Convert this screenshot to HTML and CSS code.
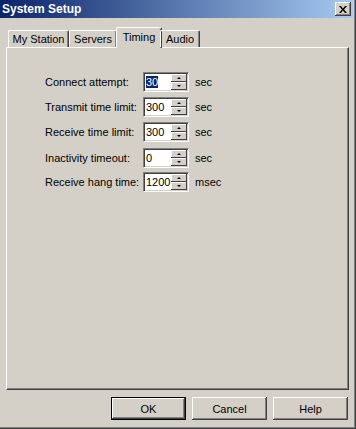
FILE: index.html
```html
<!DOCTYPE html>
<html lang="en">
  <head>
    <meta charset="UTF-8" />
    <meta name="viewport" content="width=device-width, initial-scale=1.0" />
    <title>System Setup</title>
    <link rel="stylesheet" href="styles.css">
  </head>
  <body>
    <div class="window">
      <div class="titlebar">
        <span class="title">System Setup</span>
        <button class="close" aria-label="Close">
          <svg width="8" height="7" viewBox="0 0 8 7">
            <path d="M0 0h2l2 2.5L6 0h2L5 3.5 8 7H6L4 4.5 2 7H0l3-3.5z" fill="#000" />
          </svg>
        </button>
      </div>

      <div class="tabs">
        <div class="tab tab-station">My Station</div>
        <div class="tab tab-servers">Servers</div>
        <div class="tab tab-timing selected">Timing</div>
        <div class="tab tab-audio">Audio</div>
      </div>

      <div class="panel">
        <div class="fields">
          <label class="label">Connect attempt:</label>
          <div class="spin-box">
            <span class="value"><span class="highlight">30</span></span>
            <span class="spinner"><span class="up"></span><span class="down"></span></span>
          </div>
          <span class="unit">sec</span>

          <label class="label">Transmit time limit:</label>
          <div class="spin-box">
            <span class="value">300</span>
            <span class="spinner"><span class="up"></span><span class="down"></span></span>
          </div>
          <span class="unit">sec</span>

          <label class="label">Receive time limit:</label>
          <div class="spin-box">
            <span class="value">300</span>
            <span class="spinner"><span class="up"></span><span class="down"></span></span>
          </div>
          <span class="unit">sec</span>

          <label class="label gap">Inactivity timeout:</label>
          <div class="spin-box gap">
            <span class="value">0</span>
            <span class="spinner"><span class="up"></span><span class="down"></span></span>
          </div>
          <span class="unit gap">sec</span>

          <label class="label">Receive hang time:</label>
          <div class="spin-box">
            <span class="value">1200</span>
            <span class="spinner"><span class="up"></span><span class="down"></span></span>
          </div>
          <span class="unit">msec</span>
        </div>
      </div>

      <div class="buttons">
        <button class="btn default">OK</button>
        <button class="btn">Cancel</button>
        <button class="btn">Help</button>
      </div>
    </div>
  </body>
</html>
```

FILE: styles.css
```css
body {
  margin: 0;
  font-family: "Liberation Sans", Arial, sans-serif;
  font-size: 11px;
  color: #000;
}
.window {
  width: 356px;
  height: 429px;
  box-sizing: border-box;
  background: #d4d0c8;
  border-right: 1px solid #404040;
  border-bottom: 1px solid #404040;
  box-shadow: inset -1px -1px #808080;
  display: flex;
  flex-direction: column;
}
.titlebar {
  height: 18px;
  margin-right: 2px;
  padding: 0 2px 0 2px;
  display: flex;
  align-items: center;
  justify-content: space-between;
  background: linear-gradient(to right, #0a246a, #a6caf0);
}
.title {
  color: #fff;
  font-weight: bold;
  font-size: 12px;
}
.close {
  width: 16px;
  height: 14px;
  padding: 0;
  margin-right: 0;
  display: flex;
  align-items: center;
  justify-content: center;
  background: #d4d0c8;
  border: none;
  box-shadow: inset -1px -1px #404040, inset 1px 1px #fff, inset -2px -2px #808080;
}
.tabs {
  display: flex;
  align-items: flex-end;
  height: 21px;
  margin-top: 8px;
  padding-left: 8px;
  position: relative;
  z-index: 1;
}
.tab {
  height: 17px;
  box-sizing: border-box;
  line-height: 16px;
  text-align: center;
  border-top: 1px solid #fff;
  border-left: 1px solid #fff;
  border-right: 1px solid #404040;
  border-radius: 2px 2px 0 0;
  box-shadow: inset -1px 0 #808080;
}
.tab-station { width: 61px; }
.tab-servers { width: 48px; }
.tab-timing { width: 46px; }
.tab-audio { width: 40px; }
.tab.selected {
  height: 21px;
  margin: 0 -2px -1px -1px;
  line-height: 18px;
  background: #d4d0c8;
}
.panel {
  flex: 1;
  margin: 0 6px 0 6px;
  border-top: 1px solid #fff;
  border-left: 1px solid #fff;
  border-right: 1px solid #404040;
  border-bottom: 1px solid #404040;
  box-shadow: inset -1px -1px #808080;
  padding: 24px 0 0 38px;
}
.fields {
  display: grid;
  grid-template-columns: 98px 46px auto;
  grid-auto-rows: 20px;
  row-gap: 5px;
  align-items: center;
}
.gap {
  margin-top: 2px;
}
.spin-box {
  height: 20px;
  box-sizing: border-box;
  display: flex;
  background: #fff;
  border-top: 1px solid #808080;
  border-left: 1px solid #808080;
  border-right: 1px solid #fff;
  border-bottom: 1px solid #fff;
  box-shadow: inset 1px 1px #404040, inset -1px -1px #d4d0c8;
}
.value {
  flex: 1;
  padding: 2px 0 0 2px;
  line-height: 14px;
}
.highlight {
  background: #0a246a;
  color: #fff;
}
.spinner {
  width: 16px;
  display: flex;
  flex-direction: column;
  padding: 1px 1px 1px 0;
}
.up,
.down {
  flex: 1;
  background: #d4d0c8;
  box-shadow: inset -1px -1px #404040, inset 1px 1px #fff;
  display: flex;
  align-items: center;
  justify-content: center;
}
.up::after {
  content: "";
  border-left: 2px solid transparent;
  border-right: 2px solid transparent;
  border-bottom: 2px solid #000;
}
.down::after {
  content: "";
  border-left: 2px solid transparent;
  border-right: 2px solid transparent;
  border-top: 2px solid #000;
}
.unit {
  padding-left: 6px;
}
.buttons {
  display: flex;
  justify-content: flex-end;
  gap: 6px;
  margin: 7px 7px 8px 0;
}
.btn {
  width: 75px;
  height: 23px;
  padding: 0;
  font-family: "Liberation Sans", Arial, sans-serif;
  font-size: 11px;
  background: #d4d0c8;
  border: none;
  box-shadow: inset -1px -1px #404040, inset 1px 1px #fff, inset -2px -2px #808080;
}
.btn.default {
  box-shadow: inset 0 0 0 1px #000, inset -2px -2px #404040, inset 2px 2px #fff, inset -3px -3px #808080;
}
```
